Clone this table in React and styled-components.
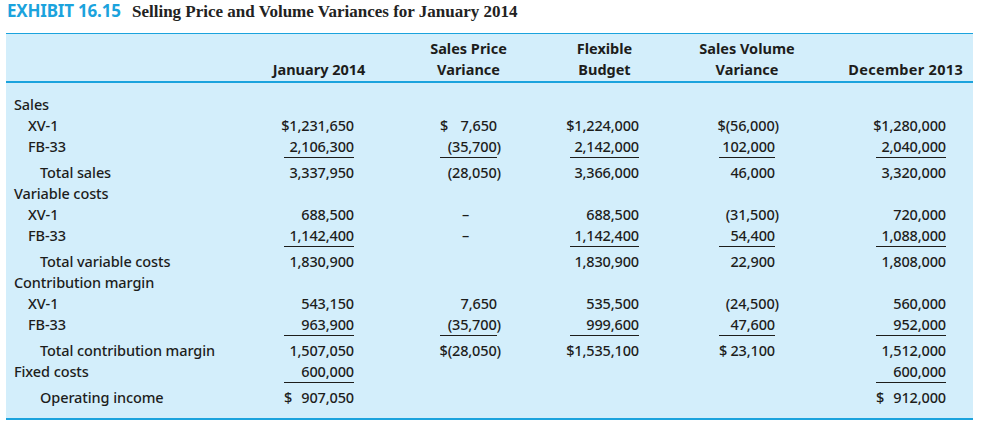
import React from 'react';
import styled, { createGlobalStyle } from 'styled-components';

const SANS = '"Noto Sans Condensed", "Noto Sans", "Liberation Sans", sans-serif';

const Global = createGlobalStyle`
  body {
    margin: 0;
    background: #fff;
    font-family: ${SANS};
    font-stretch: condensed;
    color: #1d1d1b;
  }
`;

const COLS = '270px 70px 86px 57px 73px 69px 80px 56px 101px 70px 1fr';
const BLUE = '#1ba3dd';

const Page = styled.div`
  width: 984px;
  height: 421px;
  overflow: hidden;
`;

const TitleBar = styled.div`
  height: 33px;
  display: flex;
  align-items: flex-start;
  padding-left: 7px;
  box-sizing: border-box;
  white-space: nowrap;
`;

const Exhibit = styled.span`
  flex: none;
  width: 125px;
  font-family: ${SANS};
  font-stretch: condensed;
  font-weight: 700;
  font-size: 17px;
  letter-spacing: -0.2px;
  color: ${BLUE};
  line-height: 21px;
`;

const Caption = styled.span`
  font-family: "Liberation Serif", "Times New Roman", serif;
  font-stretch: normal;
  font-weight: 700;
  font-size: 17px;
  line-height: 21px;
  margin-top: 1px;
  color: #222;
`;

const Table = styled.div`
  margin-left: 6px;
  width: 967px;
  background: #d3eefb;
  border-top: 1px solid ${BLUE};
  border-bottom: 2px solid ${BLUE};
`;

const HeadRow = styled.div`
  display: grid;
  grid-template-columns: ${COLS};
  padding: 4px 0 3px 8px;
  height: 49px;
  box-sizing: border-box;
  border-bottom: 2px solid ${BLUE};
  font-weight: 700;
  font-size: 14.5px;
  line-height: 21px;
`;

const HeadCell = styled.div`
  grid-column: ${(p) => p.$col} / span ${(p) => p.$span || 1};
  display: flex;
  flex-direction: column;
  justify-content: flex-end;
  align-items: ${(p) => (p.$right ? 'flex-end' : 'center')};
  padding-right: ${(p) => (p.$right ? '10px' : '0')};
  letter-spacing: ${(p) => (p.$right ? '0.3px' : '0')};
  white-space: nowrap;
`;

const Body = styled.div`
  padding: 11px 0 10px 8px;
`;

const Row = styled.div`
  display: grid;
  grid-template-columns: ${COLS};
  align-items: start;
  margin-top: ${(p) => (p.$after ? '4px' : '0')};
  font-size: 14.5px;
  font-weight: 500;
  line-height: 21px;
`;

const Label = styled.div`
  grid-column: 1;
  padding-left: ${(p) => [0, 14, 26][p.$level]}px;
  letter-spacing: -0.1px;
  white-space: nowrap;
`;

const Num = styled.div`
  grid-column: ${(p) => p.$col};
  display: flex;
  justify-content: ${(p) => (p.$split ? 'space-between' : 'flex-end')};
  border-bottom: ${(p) => (p.$under ? '1px solid #1d1d1b' : 'none')};
  letter-spacing: -0.15px;
  white-space: nowrap;
`;

const Paren = styled.span`
  margin-right: -0.27em;
`;

const Dash = styled.span`
  margin-right: 28px;
`;

const headers = [
  { col: 2, lines: ['January 2014'] },
  { col: 4, lines: ['Sales Price', 'Variance'] },
  { col: 6, lines: ['Flexible', 'Budget'] },
  { col: 8, lines: ['Sales Volume', 'Variance'] },
  { col: 10, span: 2, right: true, lines: ['December 2013'] },
];

const rows = [
  { label: 'Sales', level: 0 },
  { label: 'XV-1', level: 1, vals: ['$1,231,650', '$ 7,650', '$1,224,000', '$(56,000)', '$1,280,000'] },
  { label: 'FB-33', level: 1, vals: ['2,106,300', '(35,700)', '2,142,000', '102,000', '2,040,000'], under: [1, 1, 1, 1, 1] },
  { label: 'Total sales', level: 2, after: true, vals: ['3,337,950', '(28,050)', '3,366,000', '46,000', '3,320,000'] },
  { label: 'Variable costs', level: 0 },
  { label: 'XV-1', level: 1, vals: ['688,500', '–', '688,500', '(31,500)', '720,000'] },
  { label: 'FB-33', level: 1, vals: ['1,142,400', '–', '1,142,400', '54,400', '1,088,000'], under: [1, 0, 1, 1, 1] },
  { label: 'Total variable costs', level: 2, after: true, vals: ['1,830,900', '', '1,830,900', '22,900', '1,808,000'] },
  { label: 'Contribution margin', level: 0 },
  { label: 'XV-1', level: 1, vals: ['543,150', '7,650', '535,500', '(24,500)', '560,000'] },
  { label: 'FB-33', level: 1, vals: ['963,900', '(35,700)', '999,600', '47,600', '952,000'], under: [1, 1, 1, 1, 1] },
  { label: 'Total contribution margin', level: 2, after: true, vals: ['1,507,050', '$(28,050)', '$1,535,100', '$ 23,100', '1,512,000'] },
  { label: 'Fixed costs', level: 0, vals: ['600,000', '', '', '', '600,000'], under: [1, 0, 0, 0, 1] },
  { label: 'Operating income', level: 2, after: true, vals: ['$ 907,050', '', '', '', '$ 912,000'] },
];

function Value({ text }) {
  if (text === '–') return <Dash>–</Dash>;
  const hang = text.endsWith(')');
  const body = hang ? text.slice(0, -1) : text;
  return (
    <span>
      {body}
      {hang && <Paren>)</Paren>}
    </span>
  );
}

function Cell({ col, text, under }) {
  const split = text.startsWith('$ ');
  return (
    <Num $col={col} $under={under} $split={split}>
      {split ? (
        <>
          <span>$</span>
          <Value text={text.slice(2)} />
        </>
      ) : (
        <Value text={text} />
      )}
    </Num>
  );
}

export default function App() {
  return (
    <Page>
      <Global />
      <TitleBar>
        <Exhibit>EXHIBIT 16.15</Exhibit>
        <Caption>Selling Price and Volume Variances for January 2014</Caption>
      </TitleBar>
      <Table>
        <HeadRow>
          {headers.map((h) => (
            <HeadCell key={h.col} $col={h.col} $span={h.span} $right={h.right}>
              {h.lines.map((l) => (
                <span key={l}>{l}</span>
              ))}
            </HeadCell>
          ))}
        </HeadRow>
        <Body>
          {rows.map((r, i) => (
            <Row key={i} $after={r.after}>
              <Label $level={r.level}>{r.label}</Label>
              {(r.vals || []).map((v, j) => (
                <Cell
                  key={j}
                  col={2 + j * 2}
                  text={v}
                  under={r.under ? !!r.under[j] : false}
                />
              ))}
            </Row>
          ))}
        </Body>
      </Table>
    </Page>
  );
}
